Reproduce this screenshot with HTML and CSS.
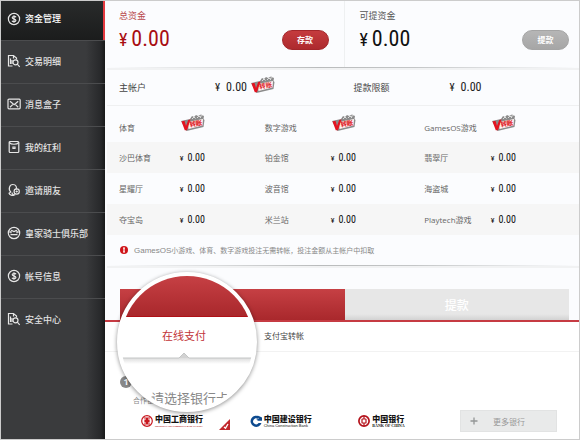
FILE: index.html
```html
<!DOCTYPE html>
<html lang="zh-CN">
<head>
<meta charset="utf-8">
<meta name="viewport" content="width=device-width, initial-scale=1">
<title>资金管理</title>
<link rel="stylesheet" href="styles.css">
</head>
<body>
<svg class="defs" aria-hidden="true">
  <symbol id="i-coin" viewBox="0 0 14 14"><circle cx="7" cy="7" r="5.600"/><path d="M9 5.200C8.600 4.300 5.200 4 5.200 5.700c0 1.700 3.700.9 3.700 2.700 0 1.600-3.400 1.500-3.900.3M7 3.300v7.400"/></symbol>
  <symbol id="i-doc" viewBox="0 0 14 14"><path d="M5.500 12H1.500V1.500h5l3 2.500v1.500M6.500 1.500v3M3.500 4.500v5.500M5 6v4"/><circle cx="8.500" cy="8.300" r="2.500"/><path d="M10.300 10.200l2.400 2.600"/></symbol>
  <symbol id="i-mail" viewBox="0 0 14 14"><rect x="1" y="2.200" width="12.200" height="9.600" rx="1"/><path d="M3 4.200l4.100 3.600 4.100-3.600M3 10.200l2.700-2.600M11.200 10.200L8.500 7.600"/></symbol>
  <symbol id="i-pack" viewBox="0 0 14 14"><rect x="2.200" y="1.500" width="9.600" height="11" rx="1"/><path d="M2.200 2.500c2 2.300 7.600 2.300 9.600 0M6 7h2v1.500H6z"/></symbol>
  <symbol id="i-friend" viewBox="0 0 14 14"><path d="M4 9C.8 6.500 2.500 1.500 5.800 1.500S10.200 4.500 9 6.500M4 9l-2 1.200c.5 2 3.500 2.500 5 2M5 9.500c0 2 2 3 3.200 2"/><circle cx="9.700" cy="8.500" r="2.600"/><path d="M9.700 7.400v2.200M8.600 8.500h2.200"/></symbol>
  <symbol id="i-club" viewBox="0 0 14 14"><circle cx="7" cy="7" r="5.700"/><path d="M1.500 6h2l1.200-1.500L7 5.500l2.300-1L10.500 6h2M3.500 8.700h7M4 6v1.200M10 6v1.200"/></symbol>
  <symbol id="i-sticker" viewBox="0 0 26 18">
    <path d="M1 7l9-2 2-3 2 1 2-2 2 1 3-1.500 3 1.500-.5 3 1 1-1 7-17 4z" fill="#8b8b8b"/>
    <path d="M12 5l2-2 1.500 1.500M17 4l2-2 2 2M20 2.500l2.500-1" stroke="#ddd" fill="none"/>
    <path d="M8 8l15-3-.5 6.500L8.500 15z" fill="#fff5f2"/>
    <path d="M1.500 7.500l3-.7L6 12l2.200-6 2.300-.5L7 16.200H4.800z" fill="#e31320"/>
    <text x="9.500" y="13" transform="rotate(-9 10 13)" font-size="6.500" font-weight="700" fill="#dd1c28">转账</text>
  </symbol>
</svg>
<div class="app">
  <nav class="side">
    <a class="active" href="#"><svg class="ico"><use href="#i-coin"/></svg>资金管理</a>
    <a href="#"><svg class="ico"><use href="#i-doc"/></svg>交易明细</a>
    <a href="#"><svg class="ico"><use href="#i-mail"/></svg>消息盒子</a>
    <a href="#"><svg class="ico"><use href="#i-pack"/></svg>我的红利</a>
    <a href="#"><svg class="ico"><use href="#i-friend"/></svg>邀请朋友</a>
    <a href="#"><svg class="ico"><use href="#i-club"/></svg>皇家骑士俱乐部</a>
    <a href="#"><svg class="ico"><use href="#i-coin"/></svg>帐号信息</a>
    <a href="#"><svg class="ico"><use href="#i-doc"/></svg>安全中心</a>
  </nav>
  <main>
    <section class="summary">
      <div class="fund total">
        <div><h2>总资金</h2><p class="big"><i>¥</i>0.00</p></div>
        <button type="button" class="pill red">存款</button>
      </div>
      <div class="fund">
        <div><h2>可提资金</h2><p class="big"><i>¥</i>0.00</p></div>
        <button type="button" class="pill">提款</button>
      </div>
    </section>
    <div class="rule"></div>
    <section class="account">
      <div><span class="name">主帐户</span><span class="mid"><i>¥</i>0.00</span><svg class="sticker"><use href="#i-sticker"/></svg></div>
      <div><span class="name">提款限额</span><span class="mid"><i>¥</i>0.00</span></div>
    </section>
    <table class="games">
      <colgroup><col class="c1"><col class="c2"><col class="c3"><col class="c4"><col class="c5"><col></colgroup>
      <tr class="top"><th>体育</th><td><svg class="sticker"><use href="#i-sticker"/></svg></td><th>数字游戏</th><td><svg class="sticker"><use href="#i-sticker"/></svg></td><th>GamesOS游戏</th><td><svg class="sticker"><use href="#i-sticker"/></svg></td></tr>
      <tr><th>沙巴体育</th><td><i>¥</i>0.00</td><th>铂金馆</th><td><i>¥</i>0.00</td><th>翡翠厅</th><td><i>¥</i>0.00</td></tr>
      <tr><th>星耀厅</th><td><i>¥</i>0.00</td><th>波音馆</th><td><i>¥</i>0.00</td><th>海盗城</th><td><i>¥</i>0.00</td></tr>
      <tr><th>夺宝岛</th><td><i>¥</i>0.00</td><th>米兰站</th><td><i>¥</i>0.00</td><th>Playtech游戏</th><td><i>¥</i>0.00</td></tr>
    </table>
    <p class="note"><svg viewBox="0 0 8 8"><circle cx="4" cy="4" r="4" fill="#cf1419"/><path d="M3 2h2M4 1.500v5M3 6h2" stroke="#fff" stroke-width="1.200"/></svg><span><span class="latin">GamesOS</span>小游戏、体育、数字游戏投注无需转帐，投注金额从主帐户中扣取</span></p>
    <div class="rule"></div>
    <section class="pay">
      <div class="tabs">
        <button type="button" class="on" aria-label="存款"></button>
        <button type="button">提款</button>
      </div>
      <div class="subtabs"><a href="#">支付宝转帐</a></div>
      <div class="step">
        <b>1</b>
        <p>合作银</p>
      </div>
      <div class="banks">
        <div class="bank">
          <svg class="mark" viewBox="0 0 12 12"><circle cx="6" cy="6" r="5.300" fill="none" stroke="#c8171e" stroke-width="1.200"/><path d="M3 3h2.500v2H4v2h1.500v2H3M9 3H6.500v2H8v2H6.500v2H9M4 6h4" fill="none" stroke="#c8171e" stroke-width="1.200"/></svg>
          <div><strong>中国工商银行</strong><small class="icbc">INDUSTRIAL AND COMMERCIAL BANK OF CHINA</small></div>
          <svg class="corner" viewBox="0 0 11 11"><path d="M11 0v11H0z" fill="#c0272c"/><path d="M5 8l1.500 1.200L9 5" fill="none" stroke="#fff" stroke-width="1.300"/></svg>
        </div>
        <div class="bank">
          <svg class="mark" viewBox="0 0 12 12"><path d="M9.700 1.900A5.600 5.600 0 1 0 11.500 8H8.600A3 3 0 1 1 7.700 3.700z" fill="#0d4a8f"/><path d="M7.500 .5L12 2.500v3.300H7L6.200 4.500 9 3.300z" fill="#0d4a8f"/><path d="M4.500 4.500h3v3h-3z" fill="#fff"/></svg>
          <div><strong>中国建设银行</strong><small>China Construction Bank</small></div>
        </div>
        <div class="bank">
          <svg class="mark" viewBox="0 0 12 12"><circle cx="6" cy="6" r="5.100" fill="none" stroke="#b5121b" stroke-width="1.700"/><rect x="4" y="4" width="4" height="4" rx=".6" fill="none" stroke="#b5121b" stroke-width="1.200"/><path d="M6 1v3M6 8v3" stroke="#b5121b" stroke-width="1.200"/></svg>
          <div><strong>中国银行</strong><small class="boc">BANK OF CHINA</small></div>
        </div>
        <button type="button" class="more"><svg viewBox="0 0 8 8"><path d="M4 .5v7M.5 4h7" stroke="#949696" stroke-width="1.300"/></svg>更多银行</button>
      </div>
      <div class="lens">
        <div class="lens-tab"></div>
        <a href="#">在线支付</a>
        <svg class="lens-line" viewBox="0 0 130 14"><defs><linearGradient id="g" x2="0" y2="1"><stop stop-color="#dcdcdc"/><stop offset="1" stop-color="#fff"/></linearGradient></defs><path d="M0 5h130v6H0z" fill="url(#g)"/><path d="M0 5h57l5-5 5 5h63" fill="#d2d2d2" stroke="#c4c6c6"/></svg>
        <p>请选择银行卡</p>
      </div>
    </section>
  </main>
</div>
</body>
</html>
```
FILE: styles.css
```css
* { box-sizing: border-box; margin: 0; padding: 0; }
body {
  font-family: "Open Sans", "Noto Sans CJK SC", sans-serif;
  background: #fff;
  color: #555;
}
button { font: inherit; border: 0; }
a { color: inherit; text-decoration: none; }
i { font-style: normal; }
.defs { display: none; }

.app {
  display: flex;
  min-height: 100vh;
  border: 1px solid #ccc;
  border-bottom-width: 2px;
  overflow: hidden;
}

/* Sidebar */
.side {
  flex: 0 0 104px;
  background: linear-gradient(90deg, #3a3b3d 0 85px, #27282a 100px, #181919);
}
.side a {
  display: flex;
  align-items: center;
  gap: 4px;
  height: 43px;
  padding: 0 0 2px 6px;
  border-top: 1px solid #4b4c4e;
  color: #e2e2e2;
  font-size: 9px;
  font-weight: 500;
}
.side .active {
  height: 39px;
  padding-bottom: 4px;
  border-top: 0;
  border-right: 2px solid #e5393f;
  background: linear-gradient(#292b2b, #1b1c1c);
  color: #fff;
}
.ico { width: 14px; height: 14px; fill: none; stroke: #e6e6e6; stroke-width: 1.2; }

/* Main */
main { flex: 1; min-width: 0; background: #fbfcfe; padding-left: 2px; }
.summary { display: flex; height: 66px; }
.fund {
  flex: 1;
  display: flex;
  justify-content: space-between;
  padding: 9px 10px 0 15px;
}
.total { padding-right: 15px; padding-left: 12px; border-right: 1px solid #eef0f1; }
.fund h2 { font-size: 9px; line-height: 12px; font-weight: 400; }
.total h2 { color: #b8484c; }
.big { font: 22px/34px "Roboto Condensed", "Open Sans Condensed", "Liberation Sans", sans-serif; color: #111; }
.total .big { color: #a80d12; }
.big i { font-size: 18px; margin-right: 4px; }
.pill {
  align-self: flex-start;
  width: 47px;
  height: 20px;
  margin-top: 20px;
  border: 1px solid #a4a4a4;
  border-radius: 10px;
  background: linear-gradient(#b6b6b6, #a6a6a6);
  color: #fff;
  font-size: 8px;
  line-height: 16px;
  font-weight: 700;
}
.pill.red { background: linear-gradient(#c53b3e, #ad2a2e); border-color: #a3262a; }
.rule {
  height: 3px;
  background: linear-gradient(90deg, #fbfcfe, #b9bbbc 45%, #c4c6c7 65%, #fbfcfe);
  border-bottom: 2px solid #f1f2f3;
}
.account {
  display: flex;
  height: 36px;
  border-bottom: 1px solid #eff0f1;
  font-size: 9px;
  color: #444;
}
.account div { flex: 1; display: flex; align-items: center; padding-left: 12px; }
.account div + div { padding-left: 9px; }
.account .name { width: 96px; }
.mid { font: 12px/16px "Roboto Condensed", "Open Sans Condensed", "Liberation Sans", sans-serif; color: #222; }
.mid i { font-size: 11px; margin-right: 6px; }
.sticker { width: 26px; height: 18px; }
.account .sticker { margin: 0 0 6px 3px; }

.games {
  width: 100%;
  border-collapse: collapse;
  table-layout: fixed;
  font-size: 8px;
}
.c1 { width: 15.4%; }
.c2 { width: 18%; }
.c3 { width: 14%; }
.c4 { width: 19.8%; }
.c5 { width: 14.1%; }
.games tr { height: 31px; }
.games tr.top { height: 36px; }
.games tr:nth-child(even) { background: #f6f6f6; }
.games th { text-align: left; font-weight: 400; white-space: nowrap; color: #666; }
.games .top th { padding-top: 6px; }
.games th:first-child { padding-left: 12px; }
.games td { padding-top: 2px; font: 10px/12px "Roboto Condensed", "Open Sans Condensed", "Liberation Sans", sans-serif; color: #111; }
.games td i { font-size: 8px; margin-right: 4px; }
.games .sticker { display: block; margin-bottom: 2px; }
.games .top td { padding: 0; }

.note {
  display: flex;
  align-items: center;
  gap: 6px;
  height: 30px;
  padding-left: 13px;
  font-size: 7px;
  color: #888;
}
.note svg { width: 8px; height: 8px; }
.latin { font-family: "Liberation Sans", sans-serif; font-size: 8px; }

/* Payment */
.pay { position: relative; margin-left: -2px; padding-top: 21px; }
.tabs {
  display: flex;
  padding: 0 10px 0 15px;
  border-bottom: 2px solid #c63b43;
}
.tabs button {
  flex: 1;
  height: 31px;
  background: linear-gradient(#e7e7e7 25px, #d2d2d2);
  color: #fff;
  font-size: 12px;
  font-weight: 500;
}
.tabs .on { background: linear-gradient(#c64044, #a9282c); }
.subtabs {
  height: 30px;
  padding: 6px 0 0 159px;
  background: #fff;
  border-bottom: 1px solid #f2f2f2;
  font-size: 8px;
  line-height: 16px;
  color: #444;
}
.subtabs a { display: block; }
.step {
  height: 58px;
  padding: 24px 0 0 15px;
  background: #fff;
  font-size: 7px;
  line-height: 10px;
  color: #888;
}
.step b {
  display: block;
  width: 12px;
  border-radius: 6px;
  background: #888;
  color: #fff;
  font-size: 9px;
  line-height: 12px;
  text-align: center;
}
.step p { padding: 8px 0 0 13px; }
.banks {
  display: grid;
  grid-template-columns: repeat(3, 1fr) 97px;
  gap: 32px;
  padding: 0 22px 7px 29px;
  background: #fff;
}
.bank {
  position: relative;
  display: flex;
  align-items: center;
  gap: 2px;
  height: 22px;
  padding-left: 7px;
  color: #111;
}
.mark { flex: none; width: 12px; height: 12px; }
.bank strong {
  display: block;
  font-size: 8px;
  line-height: 10px;
  font-weight: 900;
  white-space: nowrap;
}
.bank small { display: block; font: 4px/4px "Liberation Sans", sans-serif; white-space: nowrap; }
.bank .icbc { font-size: 2px; color: #b33; font-weight: 700; }
.bank .boc { font-family: "Liberation Serif", serif; font-weight: 700; }
.corner { position: absolute; left: 85px; top: 9px; width: 11px; height: 11px; }
.more {
  display: flex;
  align-items: center;
  gap: 15px;
  height: 22px;
  padding-left: 9px;
  border: 1px solid #e2e3e3;
  background: #e9eaea;
  color: #999;
  font-size: 8px;
}
.more svg { width: 8px; height: 8px; }

/* Magnifier over the selected payment method */
.lens {
  position: absolute;
  left: 12px;
  top: 4px;
  width: 140px;
  height: 140px;
  overflow: hidden;
  border: 4px solid #fff;
  border-radius: 50%;
  background: #fff;
  box-shadow: 0 1px 4px rgba(0, 0, 0, .45);
}
.lens-tab { height: 41px; background: linear-gradient(#c64044, #a9282c); border-bottom: 1px solid #b01016; }
.lens a { display: block; padding-left: 41px; font-size: 11px; line-height: 38px; color: #c23338; }
.lens-line { display: block; width: 130px; height: 14px; margin: -2px auto 0; }
.lens p { padding: 19px 0 0 30px; font-size: 13px; line-height: 24px; color: #888; white-space: nowrap; }
```
